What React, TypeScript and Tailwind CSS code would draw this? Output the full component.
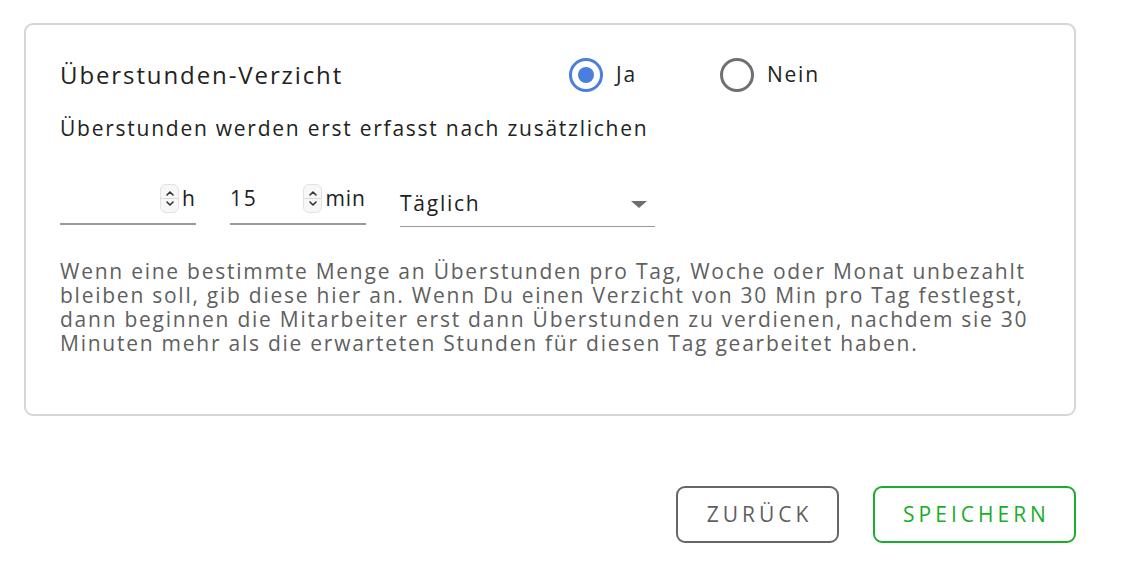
import React from "react";

function Spinner() {
  return (
    <div className="flex flex-col items-center justify-center w-[19px] h-[29px] rounded-[6px] border border-[#e2e2e2] bg-[#f7f7f7]">
      <svg width="10" height="7" viewBox="0 0 10 7" className="mb-[1px]">
        <path d="M2 5 L5 2 L8 5" fill="none" stroke="#333" strokeWidth="1.6" strokeLinecap="round" strokeLinejoin="round" />
      </svg>
      <div className="w-full h-px bg-[#dcdcdc]" />
      <svg width="10" height="7" viewBox="0 0 10 7" className="mt-[1px]">
        <path d="M2 2 L5 5 L8 2" fill="none" stroke="#333" strokeWidth="1.6" strokeLinecap="round" strokeLinejoin="round" />
      </svg>
    </div>
  );
}

function NumberField({ value, unit }: { value: string; unit: string }) {
  return (
    <div className="w-[136px] flex items-center border-b-2 border-[#9a9a9a] h-[45px] pb-[6px]">
      <span className="flex-1 text-[21px] text-[#222] leading-none">{value}</span>
      <Spinner />
      <span className="ml-[3px] text-[21px] text-[#222] leading-none tracking-[1px]">{unit}</span>
    </div>
  );
}

function Radio({ label, checked }: { label: string; checked?: boolean }) {
  return (
    <label className="flex items-center gap-[13px]">
      <span
        className={`flex items-center justify-center w-[34px] h-[34px] rounded-full border-[3px] ${
          checked ? "border-[#4a7fe0]" : "border-[#707070]"
        }`}
      >
        {checked && <span className="w-[16px] h-[16px] rounded-full bg-[#4a7fe0]" />}
      </span>
      <span className="text-[21px] text-[#222]">{label}</span>
    </label>
  );
}

export default function App() {
  return (
    <div className="w-[1124px] h-[564px] bg-white pl-[24px] pr-[48px] pt-[23px] font-['Open_Sans',sans-serif] tracking-[1.75px]">
      <div className="border-2 border-[#d6d6d6] rounded-[9px] pl-[34px] pr-[30px] pt-[32px] pb-[59px]">
        <div className="flex items-center h-[36px]">
          <h2 className="w-[509px] text-[24px] text-[#222] font-normal tracking-[1.9px]">Überstunden-Verzicht</h2>
          <div className="w-[151px]">
            <Radio label="Ja" checked />
          </div>
          <Radio label="Nein" />
        </div>

        <p className="mt-[21px] text-[21px] text-[#222] leading-[28px]">
          Überstunden werden erst erfasst nach zusätzlichen
        </p>

        <div className="flex items-start mt-[38px] gap-[34px]">
          <NumberField value="" unit="h" />
          <NumberField value="15" unit="min" />
          <div className="w-[255px] h-[47px] flex items-center justify-between border-b-[1.5px] border-[#9a9a9a] pt-[2px] pr-[8px]">
            <span className="text-[21px] text-[#222]">Täglich</span>
            <svg width="16" height="7" viewBox="0 0 16 7">
              <path d="M0 0 H16 L8 7 Z" fill="#6e6e6e" />
            </svg>
          </div>
        </div>

        <p className="mt-[32px] text-[21px] text-[#5f5f5f] leading-[24px] whitespace-nowrap">
          Wenn eine bestimmte Menge an Überstunden pro Tag, Woche oder Monat unbezahlt
          <br />
          bleiben soll, gib diese hier an. Wenn Du einen Verzicht von 30 Min pro Tag festlegst,
          <br />
          dann beginnen die Mitarbeiter erst dann Überstunden zu verdienen, nachdem sie 30
          <br />
          Minuten mehr als die erwarteten Stunden für diesen Tag gearbeitet haben.
        </p>
      </div>

      <div className="flex justify-end gap-[34px] mt-[70px]">
        <button className="w-[163px] h-[57px] border-2 border-[#666] rounded-[9px] text-[21px] tracking-[4px] pl-[4px] text-[#5f5f5f]">
          ZURÜCK
        </button>
        <button className="w-[203px] h-[57px] border-2 border-[#1aad2b] rounded-[9px] text-[21px] tracking-[4px] pl-[4px] text-[#1aad2b]">
          SPEICHERN
        </button>
      </div>
    </div>
  );
}
